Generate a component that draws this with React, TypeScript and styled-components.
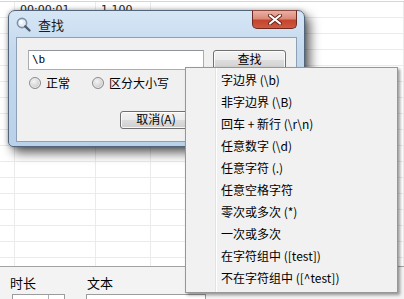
import styled, { createGlobalStyle } from "styled-components";

const GlobalStyle = createGlobalStyle`
  html, body {
    margin: 0;
    padding: 0;
  }
  body {
    width: 404px;
    height: 299px;
    overflow: hidden;
    font-family: "Noto Sans CJK SC", "Noto Sans", sans-serif;
    color: #000;
  }
`;

const Screen = styled.div`
  position: relative;
  width: 404px;
  height: 299px;
  overflow: hidden;
  background: #fff;
  display: flex;
  flex-direction: column;
`;

const Table = styled.div`
  flex: 0 0 264px;
  margin-top: 1px;
  border-top: 1px solid #d6d6d6;
  overflow: hidden;
`;

const Row = styled.div`
  display: flex;
  height: 16px;
  box-sizing: border-box;
  border-bottom: 1px solid #ebebeb;
`;

const Cell = styled.div<{ $w?: number }>`
  ${(p) => (p.$w ? `flex: 0 0 ${p.$w}px;` : "flex: 1;")}
  box-sizing: border-box;
  border-right: 1px solid #ebebeb;
  padding-left: 5px;
  font-family: "DejaVu Sans", sans-serif;
  font-size: 11px;
  line-height: 15px;
  color: #222;
  white-space: nowrap;
  overflow: hidden;
`;

const Panel = styled.div`
  flex: 1;
  background: #f3f3f3;
  border-top: 1px solid #a3a3a3;
  display: flex;
  padding: 7px 0 0 10px;
`;

const Field = styled.div<{ $w?: number }>`
  ${(p) => (p.$w ? `flex: 0 0 ${p.$w}px;` : "flex: 1;")}
  display: flex;
  flex-direction: column;
`;

const FieldLabel = styled.span<{ $indent: number }>`
  margin-left: ${(p) => p.$indent}px;
  font-size: 13px;
  line-height: 17px;
  height: 20px;
`;

const FieldBox = styled.div<{ $w?: number; $indent: number }>`
  margin-left: ${(p) => p.$indent}px;
  ${(p) => (p.$w ? `width: ${p.$w}px;` : "")}
  height: 20px;
  box-sizing: border-box;
  border: 1px solid #9c9c9c;
  background: #fff;
  display: flex;
  justify-content: flex-end;
`;

const Spin = styled.div`
  width: 15px;
  border-left: 1px solid #b0b0b0;
`;

/* dialog window */

const Window = styled.div`
  position: absolute;
  left: 8px;
  top: 10px;
  width: 297px;
  height: 137px;
  box-sizing: border-box;
  border: 1px solid #52647a;
  border-radius: 7px 7px 5px 5px;
  background: linear-gradient(180deg, #d6e6f5 0%, #c4d9ee 30%, #b9d1e9 100%);
  box-shadow: 5px 6px 11px rgba(0, 0, 0, 0.62), 0 0 4px rgba(0, 0, 0, 0.3);
  padding: 0 7px 4px 7px;
  display: flex;
  flex-direction: column;
`;

const TitleBar = styled.div`
  height: 26px;
  display: flex;
  align-items: center;
`;

const TitleText = styled.span`
  margin-left: 7px;
  font-size: 13px;
  color: #1b1b1b;
`;

const CloseButton = styled.div`
  margin-left: auto;
  align-self: flex-start;
  margin-top: -1px;
  width: 45px;
  height: 19px;
  box-sizing: border-box;
  border: 1px solid #6b2b22;
  border-top-color: #8a4a40;
  border-radius: 0 0 5px 5px;
  background: linear-gradient(
    180deg,
    #eab0a4 0%,
    #dc8a78 45%,
    #c5442f 55%,
    #cf5a40 100%
  );
  display: flex;
  align-items: center;
  justify-content: center;
`;

const Client = styled.div`
  flex: 1;
  background: #f0f0f0;
  border: 1px solid #8da0b6;
  padding: 12px 0 0 11px;
  display: flex;
  flex-direction: column;
`;

const SearchRow = styled.div`
  display: flex;
  gap: 9px;
  height: 21px;
`;

const TextBox = styled.div`
  width: 176px;
  height: 20px;
  box-sizing: border-box;
  border: 1px solid #abadb3;
  border-top-color: #8f949c;
  background: #fff;
  padding-left: 3px;
  font-family: "DejaVu Sans Mono", monospace;
  font-size: 11px;
  line-height: 18px;
`;

const Button = styled.div<{ $w: number; $h: number }>`
  width: ${(p) => p.$w}px;
  height: ${(p) => p.$h}px;
  flex: none;
  box-sizing: border-box;
  border: 1px solid #707070;
  border-radius: 3px;
  background: linear-gradient(180deg, #f3f3f3 0%, #ebebeb 48%, #dddddd 52%, #cfcfcf 100%);
  box-shadow: inset 0 0 0 1px rgba(255, 255, 255, 0.8);
  display: flex;
  align-items: center;
  justify-content: center;
  padding-bottom: 2px;
  font-size: 12px;
  line-height: 14px;
  color: #000;
`;

const RadioRow = styled.div`
  display: flex;
  align-items: center;
  margin-top: 3px;
  height: 17px;
`;

const RadioItem = styled.label<{ $w: number }>`
  width: ${(p) => p.$w}px;
  display: flex;
  align-items: center;
  gap: 5px;
  font-size: 12px;
`;

const RadioDot = styled.span`
  width: 12px;
  height: 12px;
  box-sizing: border-box;
  border-radius: 50%;
  border: 1px solid #8a8a8a;
  background: radial-gradient(circle at 40% 35%, #f4f4f4 0%, #d6d6d6 55%, #b4b4b4 100%);
  box-shadow: inset 0 0 0 1px #ededed;
  margin-left: 1px;
`;

const CancelRow = styled.div`
  display: flex;
  margin-top: 20px;
  padding-left: 92px;
`;

/* context menu */

const Menu = styled.div`
  position: absolute;
  left: 185px;
  top: 67px;
  width: 213px;
  box-sizing: border-box;
  border: 1px solid #979797;
  background: linear-gradient(
      90deg,
      transparent 29px,
      #e2e3e3 29px,
      #e2e3e3 30px,
      #ffffff 30px,
      #ffffff 31px,
      transparent 31px
    ),
    #f1f1f1;
  box-shadow: 2px 2px 3px rgba(0, 0, 0, 0.4);
  padding: 1px 0 3px 0;
`;

const MenuItem = styled.div`
  height: 22px;
  line-height: 22px;
  padding-left: 35px;
  font-size: 12px;
  color: #000;
  white-space: nowrap;
`;

const menuItems = [
  "字边界 (\\b)",
  "非字边界 (\\B)",
  "回车 + 新行 (\\r\\n)",
  "任意数字 (\\d)",
  "任意字符 (.)",
  "任意空格字符",
  "零次或多次 (*)",
  "一次或多次",
  "在字符组中 ([test])",
  "不在字符组中 ([^test])",
];

function SearchIcon() {
  return (
    <svg width="15" height="15" viewBox="0 0 15 15">
      <circle cx="6" cy="6" r="4.6" fill="#e4eef7" stroke="#7d93a8" strokeWidth="1.6" />
      <circle cx="5" cy="5" r="2" fill="#ffffff" opacity="0.8" />
      <line x1="9.3" y1="9.3" x2="13.5" y2="13.5" stroke="#4f6072" strokeWidth="2.4" strokeLinecap="round" />
    </svg>
  );
}

function CloseGlyph() {
  return (
    <svg width="14" height="11" viewBox="0 0 14 11">
      <path d="M2 1.5 L12 9.5 M12 1.5 L2 9.5" stroke="#6a2418" strokeWidth="4" strokeLinecap="round" />
      <path d="M2 1.5 L12 9.5 M12 1.5 L2 9.5" stroke="#ffffff" strokeWidth="2.2" strokeLinecap="round" />
    </svg>
  );
}

function App() {
  const rows = Array.from({ length: 17 }, (_, i) => i);

  return (
    <Screen>
      <GlobalStyle />
      <Table>
        {rows.map((i) => (
          <Row key={i}>
            <Cell $w={15} />
            <Cell $w={81}>{i === 0 ? "00:00:01" : ""}</Cell>
            <Cell $w={55}>{i === 0 ? "1.100" : ""}</Cell>
            <Cell />
          </Row>
        ))}
      </Table>
      <Panel>
        <Field $w={76}>
          <FieldLabel $indent={0}>时长</FieldLabel>
          <FieldBox $w={53} $indent={2}>
            <Spin />
          </FieldBox>
        </Field>
        <Field>
          <FieldLabel $indent={1}>文本</FieldLabel>
          <FieldBox $w={120} $indent={0} />
        </Field>
      </Panel>

      <Window>
        <TitleBar>
          <SearchIcon />
          <TitleText>查找</TitleText>
          <CloseButton>
            <CloseGlyph />
          </CloseButton>
        </TitleBar>
        <Client>
          <SearchRow>
            <TextBox>\b</TextBox>
            <Button $w={73} $h={20}>查找</Button>
          </SearchRow>
          <RadioRow>
            <RadioItem $w={63}>
              <RadioDot />
              正常
            </RadioItem>
            <RadioItem $w={90}>
              <RadioDot />
              区分大小写
            </RadioItem>
          </RadioRow>
          <CancelRow>
            <Button $w={72} $h={18}>取消(A)</Button>
          </CancelRow>
        </Client>
      </Window>

      <Menu>
        {menuItems.map((t) => (
          <MenuItem key={t}>{t}</MenuItem>
        ))}
      </Menu>
    </Screen>
  );
}

export default App;
